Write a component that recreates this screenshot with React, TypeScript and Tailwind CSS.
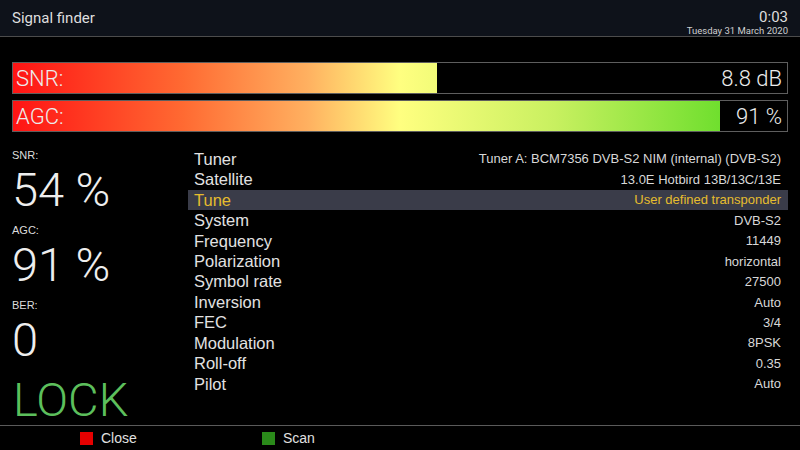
import React from "react";

const rows: { label: string; value: string; active?: boolean }[] = [
  { label: "Tuner", value: "Tuner A: BCM7356 DVB-S2 NIM (internal) (DVB-S2)" },
  { label: "Satellite", value: "13.0E Hotbird 13B/13C/13E" },
  { label: "Tune", value: "User defined transponder", active: true },
  { label: "System", value: "DVB-S2" },
  { label: "Frequency", value: "11449" },
  { label: "Polarization", value: "horizontal" },
  { label: "Symbol rate", value: "27500" },
  { label: "Inversion", value: "Auto" },
  { label: "FEC", value: "3/4" },
  { label: "Modulation", value: "8PSK" },
  { label: "Roll-off", value: "0.35" },
  { label: "Pilot", value: "Auto" },
];

function Bar({ label, value, fill }: { label: string; value: string; fill: number }) {
  return (
    <div className="relative h-[32px] border border-[#5e5e5e] bg-black">
      <div
        className="h-full bg-[linear-gradient(90deg,#ff1414_0%,#ff6a32_22%,#ffb060_38%,#ffff80_50%,#c8f060_70%,#4cd81a_100%)] bg-[length:774px_100%] bg-no-repeat"
        style={{ width: `${fill}px` }}
      />
      <div className="absolute inset-0 flex items-center justify-between pl-[3px] pr-[5px] text-[22px] font-light text-[#ececec] font-['Roboto',sans-serif]">
        <span>{label}</span>
        <span>{value}</span>
      </div>
    </div>
  );
}

function Stat({ label, value }: { label: string; value: string }) {
  return (
    <div className="flex flex-col">
      <div className="h-[13px] text-[11px] leading-[13px] text-[#dcdcdc] font-['Liberation_Sans',sans-serif]">{label}</div>
      <div className="h-[56px] text-[47px] leading-[56px] font-light text-[#eeeeee] font-['Roboto',sans-serif]">{value}</div>
    </div>
  );
}

export default function App() {
  return (
    <div className="w-[800px] h-[450px] bg-black flex flex-col overflow-hidden">
      <div className="h-[37px] shrink-0 bg-[#0e121a] border-b border-[#4c4c4c] flex justify-between px-[12px] font-['Roboto',sans-serif]">
        <div className="text-[15px] leading-[18px] pt-[9px] text-[#dedede]">Signal finder</div>
        <div className="flex flex-col items-end pt-[9px]">
          <div className="text-[15px] leading-[17px] text-[#dedede]">0:03</div>
          <div className="text-[9.5px] leading-[9px] text-[#cfcfcf]">Tuesday 31 March 2020</div>
        </div>
      </div>

      <div className="flex flex-col gap-[6px] px-[12px] pt-[25px] shrink-0">
        <Bar label="SNR:" value="8.8 dB" fill={424} />
        <Bar label="AGC:" value="91 %" fill={707} />
      </div>

      <div className="flex flex-1 min-h-0 pt-[11px]">
        <div className="w-[188px] pl-[12px] flex flex-col pt-[6px]">
          <Stat label="SNR:" value="54 %" />
          <div className="h-[6px]" />
          <Stat label="AGC:" value="91 %" />
          <div className="h-[6px]" />
          <Stat label="BER:" value="0" />
          <div className="mt-[7px] h-[50px] text-[47px] leading-[50px] font-light text-[#5cbf5c] font-['Roboto',sans-serif] pl-[1px]">LOCK</div>
        </div>
        <div className="w-[600px] flex flex-col pt-[6px] font-['Liberation_Sans',sans-serif]">
          {rows.map((r) => (
            <div
              key={r.label}
              className={`h-[20.45px] flex items-center justify-between pl-[6px] pr-[7px] ${
                r.active ? "bg-[#3a3c49] text-[#e6bc2e]" : "text-[#e2e2e2]"
              }`}
            >
              <span className="text-[16.5px]">{r.label}</span>
              <span className={`text-[13px] ${r.active ? "" : "text-[#d8d8d8]"}`}>{r.value}</span>
            </div>
          ))}
        </div>
      </div>

      <div className="h-[25px] shrink-0 border-t border-[#5a5a5a] flex items-center pl-[80px] font-['Liberation_Sans',sans-serif] text-[14px] text-[#e0e0e0]">
        <div className="w-[182px] flex items-center">
          <div className="w-[13px] h-[13px] bg-[#e60000]" />
          <span className="ml-[8px]">Close</span>
        </div>
        <div className="flex items-center">
          <div className="w-[13px] h-[13px] bg-[#2a8a1a]" />
          <span className="ml-[8px]">Scan</span>
        </div>
      </div>
    </div>
  );
}
